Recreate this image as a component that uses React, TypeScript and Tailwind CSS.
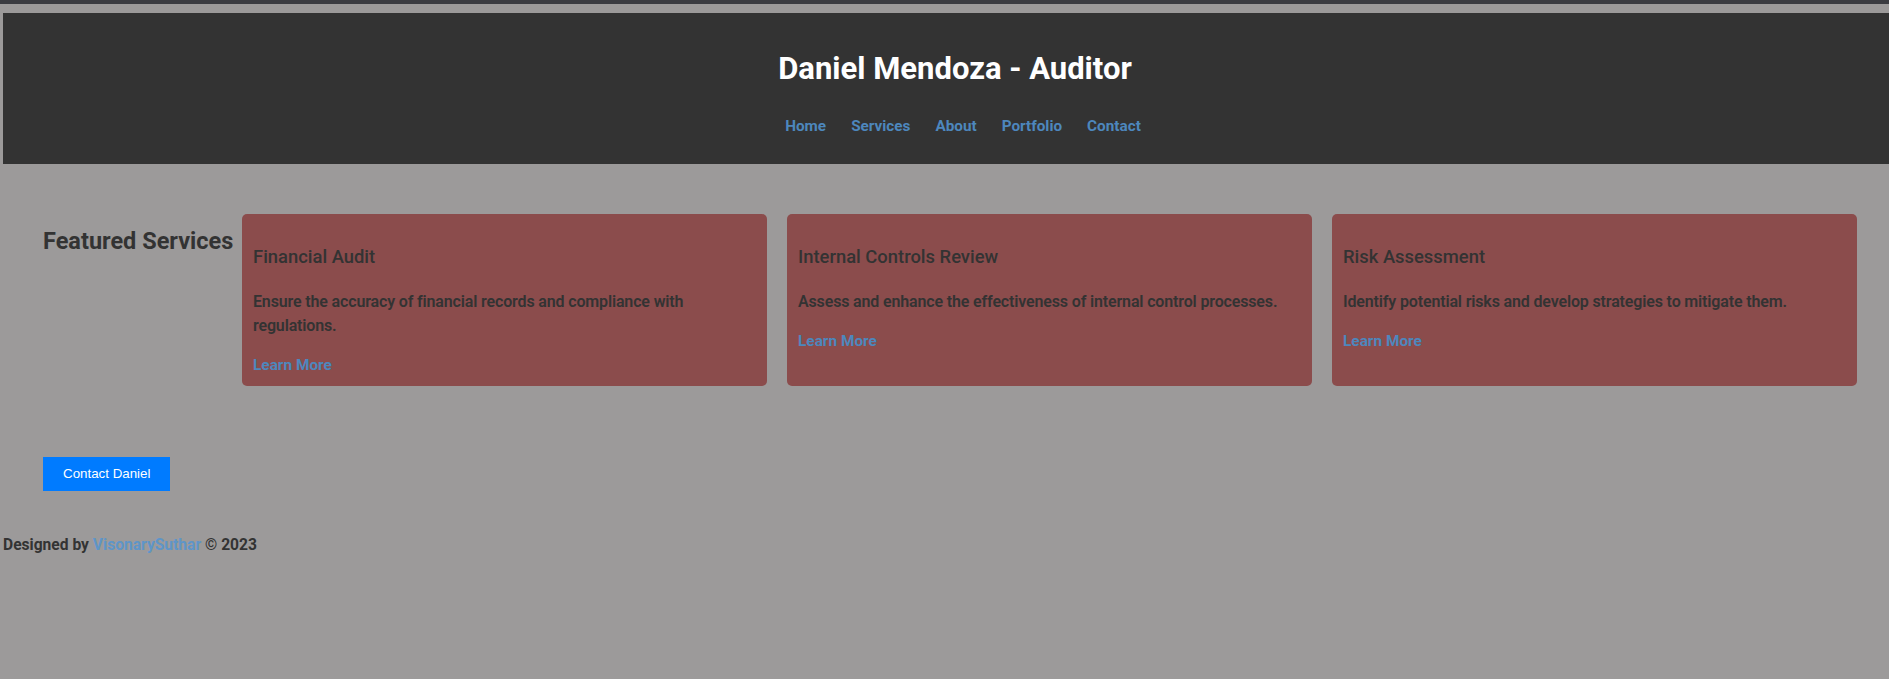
import React from "react";

const cards = [
  {
    title: "Financial Audit",
    desc: "Ensure the accuracy of financial records and compliance with regulations.",
  },
  {
    title: "Internal Controls Review",
    desc: "Assess and enhance the effectiveness of internal control processes.",
  },
  {
    title: "Risk Assessment",
    desc: "Identify potential risks and develop strategies to mitigate them.",
  },
];

export default function App() {
  return (
    <div
      className="min-h-[679px] w-full bg-[#9c9a9a] text-[#333333]"
      style={{ fontFamily: "Roboto, 'Liberation Sans', sans-serif" }}
    >
      <div className="h-[4px] bg-[#3b3c41]" />
      <div className="pt-[9px] pl-[3px]">
        <header className="flex h-[151px] flex-col items-center bg-[#333333]">
          <h1 className="mt-[37px] pl-[18px] text-[31px] font-bold leading-[38px] text-white">
            Daniel Mendoza - Auditor
          </h1>
          <nav className="mt-[26px] pl-[34px]">
            <ul className="flex gap-[25px] text-[15.3px] font-bold leading-[24px] text-[#4d87bd]">
              <li>Home</li>
              <li>Services</li>
              <li>About</li>
              <li>Portfolio</li>
              <li>Contact</li>
            </ul>
          </nav>
        </header>
      </div>

      <section className="flex items-stretch pl-[43px] pr-[32px] pt-[50px]">
        <h2 className="mt-[13px] mr-[10px] w-[189px] shrink-0 whitespace-nowrap text-[23.5px] font-bold leading-[28px]">
          Featured Services
        </h2>
        <div className="flex flex-1 gap-[20px]">
          {cards.map((c) => (
            <div
              key={c.title}
              className="flex h-[172px] flex-1 flex-col rounded-[5px] bg-[#8b4c4c] pl-[11px] pr-[4px] pt-[32px]"
            >
              <h3 className="text-[18.4px] font-medium leading-[22px]">{c.title}</h3>
              <p className="mt-[22px] text-[16px] font-semibold leading-[24px] tracking-[-0.15px]">
                {c.desc}
              </p>
              <a className="mt-[15px] text-[15.4px] font-bold leading-[24px] text-[#4d87bd]">
                Learn More
              </a>
            </div>
          ))}
        </div>
      </section>

      <div className="pl-[43px] pt-[71px]">
        <button
          className="bg-[#007bff] px-[20px] py-[10px] text-[13.33px] leading-[14px] text-white"
          style={{ fontFamily: "'Liberation Sans', Arial, sans-serif" }}
        >
          Contact Daniel
        </button>
      </div>

      <footer className="pl-[3px] pt-[42px] text-[15.6px] font-bold leading-[24px]">
        Designed by <span className="text-[#5e95c8]">VisonarySuthar</span> © 2023
      </footer>
    </div>
  );
}
